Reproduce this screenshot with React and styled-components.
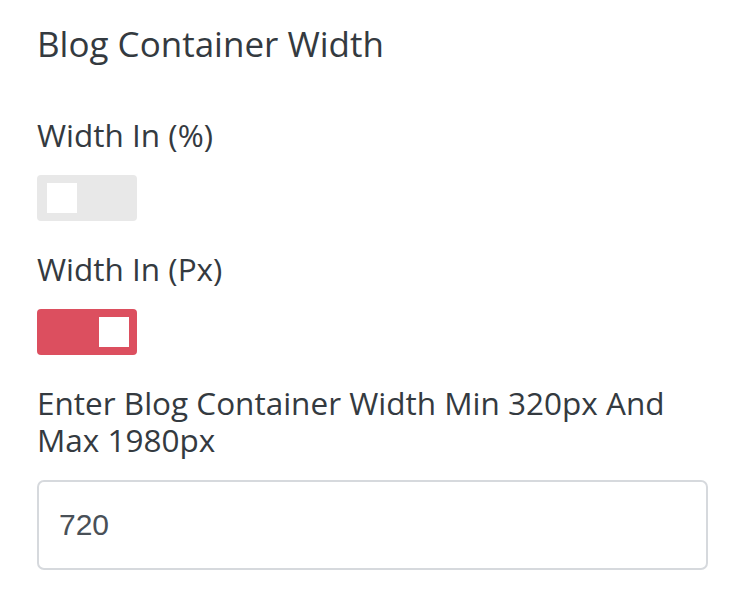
import React, { useState } from 'react'
import styled, { createGlobalStyle } from 'styled-components'

const GlobalStyle = createGlobalStyle`
    body {
        margin: 0;
        background: #fff;
        font-family: "Open Sans", "Noto Sans", sans-serif;
        color: #343a40;
    }
`

const Panel = styled.div`
    width: 672px;
    padding: 20px 0 0 37px;
`

const Title = styled.h2`
    margin: 0 0 48px;
    font-size: 35px;
    font-weight: 400;
    line-height: 48px;
`

const Field = styled.div`
    margin-bottom: 29px;
`

const Label = styled.div`
    font-size: 31.5px;
    line-height: 37px;
    margin-bottom: 22px;
`

const Track = styled.button`
    display: flex;
    justify-content: ${p => p.on ? 'flex-end' : 'flex-start'};
    width: 100px;
    height: 46px;
    padding: 8px 8px 8px 10px;
    border: none;
    border-radius: 4px;
    background: ${p => p.on ? '#dc4f5f' : '#e8e8e8'};
    cursor: pointer;
`

const Knob = styled.span`
    width: 30px;
    height: 30px;
    background: #fff;
`

const Input = styled.input`
    display: block;
    box-sizing: border-box;
    width: 671px;
    height: 90px;
    margin-top: 1px;
    padding: 0 20px;
    border: 2px solid #d6d9dd;
    border-radius: 7px;
    font-family: "Liberation Sans", Arial, sans-serif;
    font-size: 30px;
    color: #495057;
    outline: none;
`

const Toggle = ({ on, onClick }) => (
    <Track on={on} onClick={onClick}>
        <Knob />
    </Track>
)

const App = () => {
    const [percent, setPercent] = useState(false)
    const [value, setValue] = useState('720')

    return (
        <Panel>
            <GlobalStyle />
            <Title>Blog Container Width</Title>
            <Field>
                <Label>Width In (%)</Label>
                <Toggle on={percent} onClick={() => setPercent(!percent)} />
            </Field>
            <Field>
                <Label>Width In (Px)</Label>
                <Toggle on={!percent} onClick={() => setPercent(!percent)} />
            </Field>
            <Label>Enter Blog Container Width Min 320px And Max 1980px</Label>
            <Input value={value} onChange={e => setValue(e.target.value)} />
        </Panel>
    )
}

export default App
